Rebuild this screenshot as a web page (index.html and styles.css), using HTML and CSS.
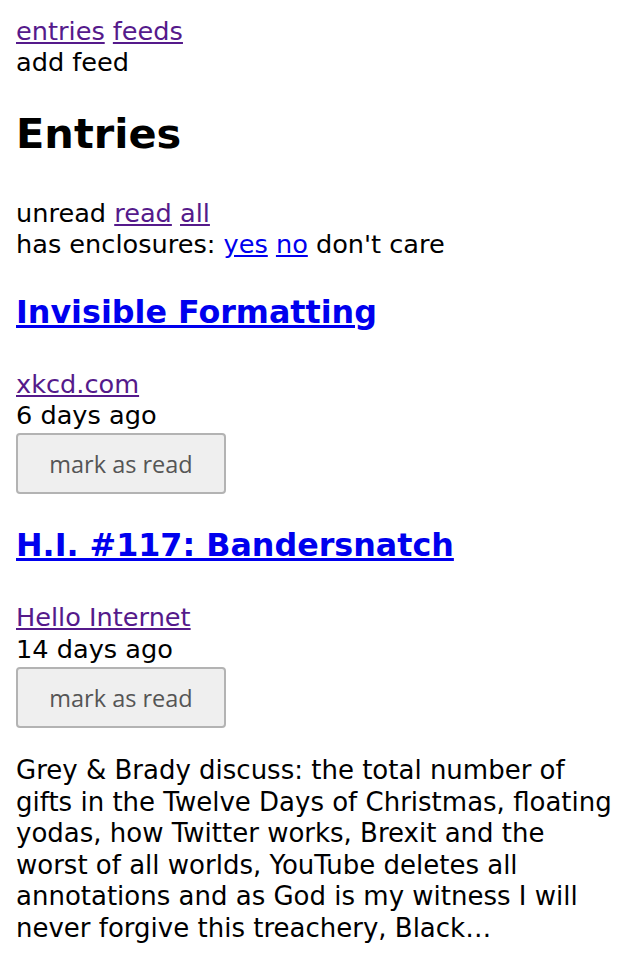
FILE: index.html
```html
<!DOCTYPE html>
<html lang="en">
<head>
<meta charset="utf-8">
<title>Entries</title>
<link rel="stylesheet" href="styles.css">
</head>
<body>
<nav class="nav">
  <div><a class="visited" href="#">entries</a> <a class="visited" href="#">feeds</a></div>
  <div>add feed</div>
</nav>
<h1 class="title">Entries</h1>
<div class="filters">
  <div>unread <a class="visited" href="#">read</a> <a class="visited" href="#">all</a></div>
  <div>has enclosures: <a class="link" href="#">yes</a> <a class="link" href="#">no</a> don't care</div>
</div>
<article class="entry">
  <h3 class="entry-title"><a class="link" href="#">Invisible Formatting</a></h3>
  <div><a class="visited" href="#">xkcd.com</a></div>
  <div>6 days ago</div>
  <button class="btn">mark as read</button>
</article>
<article class="entry">
  <h3 class="entry-title"><a class="link" href="#">H.I. #117: Bandersnatch</a></h3>
  <div><a class="visited" href="#">Hello Internet</a></div>
  <div>14 days ago</div>
  <button class="btn">mark as read</button>
  <p class="summary">Grey &amp; Brady discuss: the total number of gifts in the Twelve Days of Christmas, floating yodas, how Twitter works, Brexit and the worst of all worlds, YouTube deletes all annotations and as God is my witness I will never forgive this treachery, Black…</p>
</article>
</body>
</html>
```
FILE: styles.css
```css
html, body {
  margin: 0;
  padding: 0;
  background: #fff;
}
body {
  padding: 16px;
  font-family: "DejaVu Sans", sans-serif;
  font-size: 25.6px;
  line-height: 31.4px;
  color: #000;
}
.visited { color: #551a8b; }
.link { color: #0000ee; }
.title {
  font-size: 41.5px;
  line-height: normal;
  font-weight: bold;
  margin: 30px 0 40px;
}
.entry-title {
  font-size: 31.75px;
  line-height: normal;
  font-weight: bold;
  margin: 33px 0 39px;
}
.btn {
  font-family: "Open Sans", sans-serif;
  font-size: 23.5px;
  color: #555;
  background: #efefef;
  border: 2px solid #b3b3b3;
  border-radius: 4px;
  width: 210px;
  height: 61px;
  padding: 0;
  margin-top: 2px;
  display: block;
}
.summary {
  font-size: 26px;
  line-height: 31.46px;
  margin: 27px 0 0;
}
```
